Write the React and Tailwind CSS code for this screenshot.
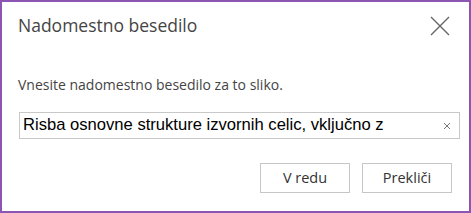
export default function App() {
  return (
    <div className="w-[471px] h-[213px] bg-white border-2 border-[#8c55b3] flex flex-col text-[#444]" style={{ fontFamily: '"Open Sans", "Noto Sans", sans-serif' }}>
      <div className="flex items-center justify-between pl-4 pr-[19px] pt-[8px] h-[40px]">
        <h1 className="text-[17.5px] leading-none font-normal">Nadomestno besedilo</h1>
        <button className="w-[20px] h-[20px] flex items-center justify-center text-[#666]">
          <svg width="20" height="20" viewBox="0 0 20 20" fill="none" stroke="currentColor" strokeWidth="1.4">
            <path d="M1 1 L19 19 M19 1 L1 19" />
          </svg>
        </button>
      </div>
      <p className="pl-4 mt-[36px] text-[14px] leading-none">Vnesite nadomestno besedilo za to sliko.</p>
      <div className="ml-[17px] mr-[9px] mt-[20px] h-[27px] border border-[#c8c8c8] flex items-center pl-[3px] pr-[8px]">
        <span className="flex-1 text-[16.6px] text-black leading-none" style={{ fontFamily: '"Liberation Sans", Arial, sans-serif' }}>
          Risba osnovne strukture izvornih celic, vključno z
        </span>
        <svg width="8" height="8" viewBox="0 0 8 8" stroke="#777" strokeWidth="1">
          <path d="M1 1 L7 7 M7 1 L1 7" />
        </svg>
      </div>
      <div className="flex justify-end gap-3 pr-[17px] mt-[24px]">
        <button className="w-[90px] h-[30px] border border-[#c6c6c6] bg-white text-[14.5px] text-[#333]">V redu</button>
        <button className="w-[90px] h-[30px] border border-[#c6c6c6] bg-white text-[14.5px] text-[#333]">Prekliči</button>
      </div>
    </div>
  );
}
